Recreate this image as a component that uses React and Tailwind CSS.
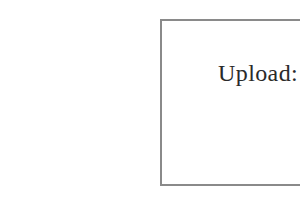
export default function App() {
  return (
    <div className="h-[210px] w-[300px] overflow-hidden bg-white pl-[160px] pt-[19px]">
      <div className="h-[167px] w-[220px] border-2 border-[#8a8a8a] pl-[56px] pt-[40px]">
        <p className="font-['Liberation_Serif',serif] text-[24px] leading-[24px] tracking-[0.4px] text-[#2a2a2a]">Upload:</p>
      </div>
    </div>
  )
}
